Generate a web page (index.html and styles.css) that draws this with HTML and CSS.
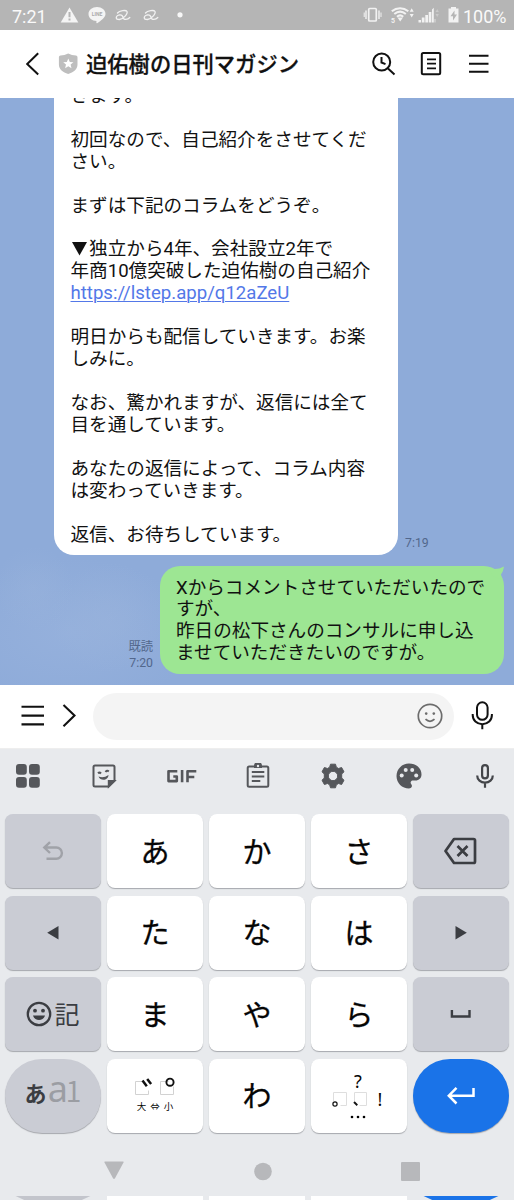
FILE: index.html
```html
<!DOCTYPE html>
<html lang="ja">
<head>
<meta charset="utf-8">
<title>迫佑樹の日刊マガジン</title>
<link rel="stylesheet" href="styles.css">
</head>
<body>
<div class="phone">
  <div class="status">
    <span class="clock">7:21</span>
    <svg class="notices" width="126" height="22" viewBox="60 4 126 22">
      <path fill="#f4f4f4" d="M69.500 7.500L78.300 22.500H60.700z"/>
      <path fill="#b5b5b5" d="M68.500 12h2v5.200h-2zM68.500 18.500h2v2h-2z"/>
      <path fill="#f4f4f4" d="M97 7c4.700 0 8.500 3 8.500 7 0 3.400-4.500 6.700-8.300 9.200-.8.500-1-.2-.7-2.100-4.400-.3-8-3.200-8-7.100 0-4 3.800-7 8.500-7z"/>
      <text class="line-mark" x="97" y="15.900">LINE</text>
      <g fill="none" stroke="#f1f1f1" stroke-linecap="round" stroke-width="1.300">
        <path id="swirl" d="M117.500 13c2-2.500 8.500-3.300 9.500-1.500 1 2-3.500 7.800-7.500 8-4.500 0-4-3.500-.5-4.500 2.500-.6 3.500.3 4 2.300.6 2.800 4.700 2.600 6.800.2"/>
        <use href="#swirl" x="28"/>
      </g>
      <circle cx="180" cy="14.800" r="2.600" fill="#f7f7f7"/>
    </svg>
    <svg class="signals" width="98" height="22" viewBox="363 4 98 22" fill="#f2f2f2">
      <rect x="368.700" y="8.500" width="7.600" height="12.500" rx="1" fill="none" stroke="#f2f2f2" stroke-width="1.700"/>
      <path d="M365.300 10.500h1.400v8.500h-1.400zM363.700 12.500h1v4.500h-1zM378.300 10.500h1.400v8.500h-1.400zM380.500 12.500h1v4.500h-1z"/>
      <g fill="none" stroke="#f2f2f2" stroke-width="2.100">
        <path d="M391.800 11.200c5-4 11.500-4 16.500 0M394.300 14c3.800-3 7.800-3 11.500 0M397 16.700c2-1.700 4.200-1.700 6.200 0"/>
      </g>
      <path d="M397.500 17.500h5.500l-2.800 4zM409.700 11.700l2-3.500 2 3.500zM409.700 14l2 3.500 2-3.500z"/>
      <text class="band" x="391" y="22.800">5</text>
      <path d="M418.500 20h2.500v2.500h-2.500zM421.800 17.500h2.700v5h-2.700zM425.300 15h2.700v7.500h-2.700zM428.700 12h2.700v10.500h-2.700zM432 9.500l1.800-1.800v14.800H432z"/>
      <path opacity=".35" d="M435.500 12l1.700-3 1.700 3zM435.500 14l1.700 3 1.700-3zM434 19h2v3.500h-2z"/>
      <path d="M451 7h5v1.500h2.500V22.500h-10V8.500h2.500z"/>
      <path fill="#b5b5b5" d="M454.500 10.500l-4 5.700h2.500v4.300l4-6h-2.500z"/>
    </svg>
    <span class="battery">100%</span>
  </div>

  <header class="header">
    <svg class="back" width="14" height="26" viewBox="26 51 14 26"><path d="M38.200 53.300L27.200 64l11 10.500" fill="none" stroke="#111" stroke-width="2"/></svg>
    <svg class="shield" width="20" height="22" viewBox="58 53 20 22">
      <path fill="#bebebe" d="M60.500 55.600q4-.1 7.700-2 3.700 1.900 7.700 2 1.600 0 1.600 1.600v7.300c0 5-4 7.800-9.300 9.600-5.300-1.800-9.300-4.600-9.300-9.600v-7.300q0-1.600 1.600-1.600z"/>
      <path fill="#fff" d="M68.300 58.500l1.500 3.400 3.600.3-2.800 2.400.9 3.600-3.200-1.900-3.200 1.900.9-3.600-2.800-2.400 3.600-.3z"/>
    </svg>
    <h1 class="title">迫佑樹の日刊マガジン</h1>
    <svg class="actions" width="120" height="28" viewBox="370 50 120 28" fill="none" stroke="#111" stroke-width="2">
      <circle cx="381.700" cy="62" r="8.500"/>
      <path d="M388 68.400l6.500 6M381.500 57v5.500l4 1.600"/>
      <rect x="421.800" y="53" width="18.400" height="21.300" rx="1.500"/>
      <path d="M427 59.300h9M427 63.700h9M427 68.300h9" stroke-width="1.800"/>
      <path d="M469 55.800h19.500M469 63.800h19.500M469 71.800h19.500"/>
    </svg>
  </header>

  <main class="chat">
    <div class="incoming">
      <div class="bubble bubble-in">きます。<br><br>初回なので、自己紹介をさせてくだ<br>さい。<br><br>まずは下記のコラムをどうぞ。<br><br><span class="mark"><svg width="17" height="16" viewBox="0 0 17 16"><path d="M1 1h15L8.500 14.500z" fill="#111"/></svg></span>独立から4年、会社設立2年で<br>年商10億突破した迫佑樹の自己紹介<br><span class="link">https://lstep.app/q12aZeU</span><br><br>明日からも配信していきます。お楽<br>しみに。<br><br>なお、驚かれますが、返信には全て<br>目を通しています。<br><br>あなたの返信によって、コラム内容<br>は変わっていきます。<br><br>返信、お待ちしています。</div>
      <span class="time">7:19</span>
    </div>
    <div class="outgoing">
      <div class="receipt">既読<br>7:20</div>
      <div class="bubble bubble-out">Xからコメントさせていただいたので<br>すが、<br>昨日の松下さんのコンサルに申し込<br>ませていただきたいのですが。
        <svg class="tail" width="20" height="16" viewBox="0 0 20 16"><path fill="#9de693" d="M2 1.500Q11 5 19 .5Q18.500 5 16 8.500L17 14L8 10z"/></svg>
      </div>
    </div>
  </main>

  <div class="composer">
    <svg width="56" height="26" viewBox="20 704 56 26" fill="none" stroke="#111" stroke-width="2.100"><path d="M21.500 707.800H44M21.500 716.600H44M21.500 725.400H44M63.500 706l11 10.500-11 10.700"/></svg>
    <div class="field">
      <svg width="26" height="26" viewBox="0 0 26 26" fill="none" stroke="#6c6c6c" stroke-width="1.700"><circle cx="13" cy="13" r="11.700"/><path d="M8.500 16.200q4.500 4.200 9 0"/><circle cx="9.200" cy="10.600" r="1.300" fill="#6c6c6c" stroke="none"/><circle cx="16.800" cy="10.600" r="1.300" fill="#6c6c6c" stroke="none"/></svg>
    </div>
    <svg class="mic" width="22" height="30" viewBox="471 702 22 30" fill="none" stroke="#111" stroke-width="2"><rect x="477" y="703.300" width="10.600" height="17.500" rx="5.300"/><path d="M472.700 715v1c0 5.300 4 9.200 9.600 9.200s9.600-3.900 9.600-9.200v-1M482.300 725.200v5"/></svg>
  </div>

  <section class="keyboard">
    <div class="tools">
      <svg width="26" height="26" viewBox="0 0 26 26" fill="#55575b"><rect x="1" y="1" width="10.800" height="10.800" rx="3"/><rect x="14" y="1" width="10.800" height="10.800" rx="3"/><rect x="1" y="14" width="10.800" height="10.800" rx="3"/><rect x="14" y="14" width="10.800" height="10.800" rx="3"/></svg>
      <svg width="26" height="26" viewBox="0 0 26 26" fill="none" stroke="#55575b" stroke-width="2"><path d="M4 2.500h18q1.500 0 1.500 1.500v13.500l-6 6H4Q2.500 23.500 2.500 22V4Q2.500 2.500 4 2.500z"/><path d="M17.800 23.300V18h5.500z" fill="#55575b"/><path d="M7 10.300q1.500-1.400 3 .2M14.500 9q1.500-2.200 3.300-.6"/><path d="M7.500 13.500q5 2 10-1.500c0 5.500-8 6.500-10 1.500z" fill="#55575b" stroke="none"/></svg>
      <svg width="30" height="26" viewBox="0 0 30 26" fill="none" stroke="#55575b" stroke-width="2.600" stroke-linejoin="round"><path d="M10.300 8.300H1.500v9.800h8.300v-4.600H6.300M15.100 7v12.300M20.500 19.300V8.300h8.800M20.500 14h6.800"/></svg>
      <svg class="clipboard" width="26" height="26" viewBox="0 0 26 26" fill="none" stroke="#55575b" stroke-width="2"><rect x="2.700" y="3.500" width="20.600" height="20.300" rx="1.500"/><path d="M6.800 9h12.500M6.800 13.500h12.500M6.800 18h8.500"/><path d="M9 3a4 4 0 0 1 8 0v2H9z" fill="#55575b" stroke="none"/><circle cx="13" cy="3" r="1.200" fill="#e8eaed" stroke="none"/></svg>
      <svg width="26" height="26" viewBox="0 0 26 26"><path fill="#55575b" stroke="#55575b" stroke-linejoin="round" fill-rule="evenodd" d="M10.500 1.200h5l.8 3 2.300 1.300 3-1 2.400 4.300-2.300 2.200v4l2.300 2.200-2.400 4.300-3-1-2.300 1.300-.8 3h-5l-.8-3-2.300-1.300-3 1L2 17.200 4.300 15v-4L2 8.800l2.400-4.300 3 1 2.300-1.300zM13 8.300a4.700 4.700 0 1 0 0 9.400 4.700 4.700 0 0 0 0-9.400z"/></svg>
      <svg width="26" height="26" viewBox="0 0 26 26"><path fill="#55575b" d="M13 .5C6 .5.500 6 .500 13S6 25.500 13 25.500c2.700 0 3.700-2.600 2.300-4.200-1.400-1.800-.3-3.800 1.700-3.800h2.500c3.500 0 6-2.500 6-6C25.500 5 20 .5 13 .5z"/><g fill="#e8eaed"><circle cx="5.700" cy="12.500" r="2"/><circle cx="9.700" cy="7" r="2"/><circle cx="16.200" cy="7" r="2"/><circle cx="20.200" cy="12.500" r="2"/></g></svg>
      <svg width="26" height="26" viewBox="0 0 26 26" fill="none" stroke="#44464a" stroke-width="2.200"><rect x="10.100" y="2.200" width="5.800" height="13.200" rx="2.900"/><path d="M5.200 12.500c0 4.300 3.400 7.100 7.800 7.100s7.800-2.800 7.800-7.100M13 19.600v5.200"/></svg>
    </div>

    <div class="keys">
      <div class="key side"><svg width="22" height="20" viewBox="0 0 22 20" fill="none" stroke="#a0a2a8" stroke-width="2.400"><path d="M8 1.200L2.300 6.500 8 12M2.300 6.500h12a5.600 5.600 0 0 1 0 11.200H4.500"/></svg></div>
      <div class="key kana">あ</div><div class="key kana">か</div><div class="key kana">さ</div>
      <div class="key side"><svg width="34" height="28" viewBox="0 0 34 28" fill="none" stroke="#3b3d42" stroke-width="2.700" stroke-linejoin="round"><path d="M10 2h19.500q1.500 0 1.500 1.500v21q0 1.500-1.500 1.500H10L1.500 14zM13.500 9l10 10M23.500 9l-10 10"/></svg></div>

      <div class="key side"><svg width="14" height="16" viewBox="0 0 14 16"><path d="M12.500 1v13.500L1.200 7.700z" fill="#3b3d42"/></svg></div>
      <div class="key kana">た</div><div class="key kana">な</div><div class="key kana">は</div>
      <div class="key side"><svg width="14" height="16" viewBox="0 0 14 16"><path d="M1.500 1v13.500l11.300-6.800z" fill="#3b3d42"/></svg></div>

      <div class="key side emoji"><svg width="26" height="26" viewBox="0 0 26 26"><circle cx="13" cy="13" r="11.200" fill="none" stroke="#3b3d42" stroke-width="2.300"/><g fill="#3b3d42"><circle cx="9" cy="9.700" r="1.900"/><circle cx="17" cy="9.700" r="1.900"/><path d="M7 14.500h12c-1.500 6-10.500 6-12 0z"/></g></svg><span>記</span></div>
      <div class="key kana">ま</div><div class="key kana">や</div><div class="key kana">ら</div>
      <div class="key side"><svg width="22" height="10" viewBox="0 0 22 10" fill="none" stroke="#3b3d42" stroke-width="2.400"><path d="M1.900 1v6.500h17.600V1"/></svg></div>

      <div class="key side pill mode"><b>あ</b><span class="latin">a</span><span class="digit">1</span></div>
      <div class="key voicing">
        <svg width="42" height="20" viewBox="0 0 42 20"><path d="M9.500 4.500H1.500v13h13v-4M34.500 4.500h-8v13h13v-8" fill="none" stroke="#d2d2d2"/><path d="M8.500 3.500l4.300 5.700M13.200 2l3.900 5" stroke="#111" stroke-width="2.500"/><circle cx="36" cy="5.200" r="3.600" fill="none" stroke="#111" stroke-width="1.900"/></svg>
        <span class="sizes">大<i>⇔</i>小</span>
      </div>
      <div class="key kana">わ</div>
      <div class="key punctuation">
        <span>?</span>
        <div class="middle"><svg width="36" height="18" viewBox="330 1087 36 18"><path d="M331.500 1098v-8.500h13v13h-6M352.500 1098v-8.500h12v13h-7" fill="none" stroke="#dedede"/><circle cx="333" cy="1101" r="2.100" fill="none" stroke="#111" stroke-width="1.200"/><path d="M352 1099l3.300 3.200" stroke="#111" stroke-width="1.900"/></svg><span>!</span></div>
        <svg width="16" height="4" viewBox="0 0 16 4"><circle cx="2" cy="2" r="1.300"/><circle cx="8" cy="2" r="1.300"/><circle cx="14" cy="2" r="1.300"/></svg>
      </div>
      <div class="key pill enter"><svg width="30" height="20" viewBox="0 0 30 20" fill="none" stroke="#fff" stroke-width="2.500"><path d="M10.500 1.800L2.800 9.700l7.700 7.800M2.800 9.700H27.500V2"/></svg></div>
    </div>

    <div class="navigation">
      <svg width="20" height="20" viewBox="0 0 20 20"><path d="M1 .5h18q1 0 .5 1L11 17.200q-1 1.600-2 0L.5 1.500Q0 .5 1 .5z"/></svg>
      <svg width="18" height="20" viewBox="0 0 18 20"><circle cx="9" cy="10.500" r="8.800"/></svg>
      <svg width="19" height="20" viewBox="0 0 19 20"><rect y="1" width="19" height="19" rx="1"/></svg>
    </div>
    <div class="next-row"><i class="edge"></i><i></i><i></i><i></i><i class="edge blue"></i></div>
  </section>
</div>
</body>
</html>
```

FILE: styles.css
```css
* { box-sizing: border-box; }
body {
  margin: 0;
  font-family: Roboto, "Noto Sans CJK JP", sans-serif;
  color: #111;
}
svg { display: block; flex: none; }
.phone {
  width: 514px;
  height: 1200px;
  display: flex;
  flex-direction: column;
  overflow: hidden;
}
.status {
  height: 30px;
  flex: none;
  display: flex;
  align-items: center;
  padding: 0 7px 0 12px;
  background: #b5b5b5;
  color: #fafafa;
  font-size: 18.5px;
}
.clock { width: 48px; padding-top: 3px; font-size: 18px; }
.signals { margin-left: auto; }
.battery { width: 44px; margin-left: 2px; padding-top: 3px; font-size: 18px; }
.line-mark { font: bold 5px Roboto, sans-serif; text-anchor: middle; fill: #aaa; }
.band { font: bold 7px Roboto, sans-serif; }
.header {
  height: 67.500px;
  flex: none;
  display: flex;
  align-items: center;
  padding: 0 24px 0 26px;
  background: #fff;
}
.shield { margin-left: 18px; }
.title {
  margin: 0 0 0 8px;
  padding-top: 2px;
  font-size: 21.300px;
  font-weight: 500;
  -webkit-text-stroke: .3px #111;
  line-height: 30px;
  white-space: nowrap;
}
.actions { margin-left: auto; }
.chat {
  height: 587px;
  flex: none;
  display: flex;
  flex-direction: column;
  justify-content: flex-end;
  gap: 11px;
  padding-bottom: 10.500px;
  overflow: hidden;
  background:
    radial-gradient(ellipse 40px 42px at 34px 490px, #9cb5dc55, #9cb5dc00),
    radial-gradient(ellipse 60px 55px at 110px 520px, #9cb5dc60, #9cb5dc00),
    radial-gradient(ellipse 130px 75px at 70px 535px, #9ab4de99, #9ab4de00),
    #8eabd9;
}
.incoming { display: flex; align-items: flex-end; padding-left: 54px; gap: 7px; }
.bubble { font-size: 18.600px; line-height: 21.940px; white-space: nowrap; }
.bubble-in {
  width: 344px;
  flex: none;
  padding: 10px 16px 8.500px 16.500px;
  border-radius: 20px;
  background: #fff;
}
.mark { display: inline-block; width: 18.600px; vertical-align: -2px; line-height: 0; }
.link { color: #5378e8; text-decoration: underline; text-decoration-thickness: 1px; text-underline-offset: 2px; }
.time, .receipt { color: #52678c; font-size: 12.300px; line-height: 16px; }
.time { padding-bottom: 4px; }
.outgoing { display: flex; justify-content: flex-end; align-items: flex-end; gap: 7px; padding-right: 10px; }
.receipt { text-align: right; padding-bottom: 3px; }
.bubble-out {
  position: relative;
  width: 344px;
  height: 108px;
  padding: 11.500px 16px 0;
  border-radius: 20px;
  background: #9de693;
}
.tail { position: absolute; right: -1px; top: 0; }
.composer {
  height: 64px;
  flex: none;
  display: flex;
  align-items: center;
  padding: 0 21px 0 20px;
  border-bottom: 1px solid #eee;
  background: #fff;
}
.field {
  width: 361px;
  height: 47px;
  margin-left: 17px;
  padding-right: 11px;
  display: flex;
  align-items: center;
  justify-content: flex-end;
  border-radius: 24px;
  background: #f4f4f4;
}
.mic { margin-left: auto; }
.keyboard { flex: 1; display: flex; flex-direction: column; background: #e8eaed; }
.tools {
  height: 65.500px;
  flex: none;
  display: flex;
  justify-content: space-between;
  padding: 14.500px 16px 0 15px;
}
.clipboard { margin: 0 -1px; }
.keys {
  display: grid;
  grid-template-columns: repeat(5, 96px);
  grid-auto-rows: 74px;
  column-gap: 6px;
  row-gap: 7.500px;
  padding: 0 5px;
}
.key {
  display: flex;
  align-items: center;
  justify-content: center;
  border-radius: 8px;
  background: #fff;
  box-shadow: 0 1px 1px #a6a8ad;
  color: #050505;
  font-size: 29px;
  line-height: 1;
}
.kana { padding-top: 4px; -webkit-text-stroke: .3px #050505; }
.side { background: #caccd4; color: #3b3d42; }
.pill { border-radius: 37px; }
.emoji { gap: 2px; font-size: 25px; }
.emoji span { padding-top: 3px; }
.mode { font-size: 22px; align-items: baseline; padding-top: 12px; }
.mode .latin { color: #9b9da3; font: 36px/1 "Noto Sans", sans-serif; margin: 0 -2px 0 1px; }
.mode .digit { color: #9b9da3; font: 28px/1 "Noto Sans CJK JP", sans-serif; }
.voicing { flex-direction: column; gap: 3px; }
.sizes { display: flex; gap: 4px; font-size: 9.500px; line-height: 14px; }
.sizes i { font-style: normal; }
.punctuation { flex-direction: column; padding-right: 2px; font-size: 18px; line-height: 18px; font-family: "Noto Sans", sans-serif; }
.middle { display: flex; align-items: center; gap: 10px; height: 18px; margin-left: -2px; }
.punctuation > svg { margin-top: 7px; }
.enter { background: #1a73e8; }
.navigation {
  display: flex;
  justify-content: space-between;
  align-items: center;
  padding: 28px 94px 0 104px;
  fill: #b7b8bb;
}
.next-row {
  display: grid;
  grid-template-columns: repeat(5, 96px);
  gap: 6px;
  height: 4px;
  padding: 0 5px;
  margin-top: auto;
}
.next-row i { background: #fff; }
.next-row .edge { background: #c3c5cc; clip-path: polygon(11% 0, 89% 0, 80% 100%, 20% 100%); }
.next-row .blue { background: #1a73e8; }
```
